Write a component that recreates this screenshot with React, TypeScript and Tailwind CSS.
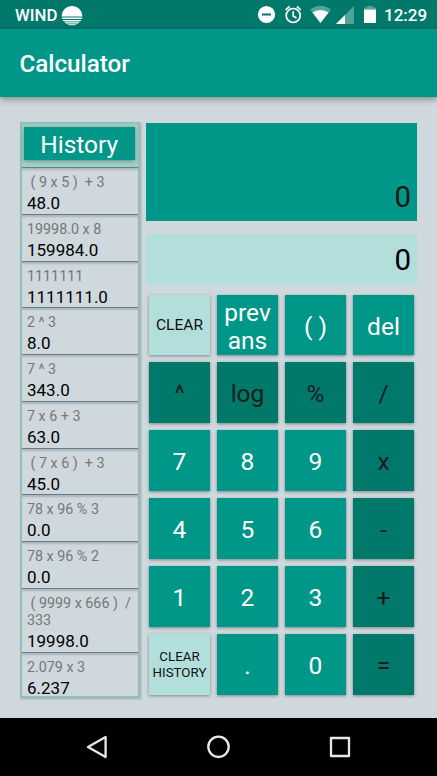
type Entry = { expr: string; value: string; tall?: boolean };

const entries: Entry[] = [
  { expr: " ( 9 x 5 )  + 3", value: "48.0" },
  { expr: "19998.0 x 8", value: "159984.0" },
  { expr: "1111111", value: "1111111.0" },
  { expr: "2 ^ 3", value: "8.0" },
  { expr: "7 ^ 3", value: "343.0" },
  { expr: "7 x 6 + 3", value: "63.0" },
  { expr: " ( 7 x 6 )  + 3", value: "45.0" },
  { expr: "78 x 96 % 3", value: "0.0" },
  { expr: "78 x 96 % 2", value: "0.0" },
  { expr: " ( 9999 x 666 )  /\n333", value: "19998.0", tall: true },
  { expr: "2.079 x 3", value: "6.237" },
];

type Tone = "light" | "main" | "dark";
type KeyDef = { label: string; tone: Tone; size?: string };

const keys: KeyDef[] = [
  { label: "CLEAR", tone: "light", size: "pt-px text-[15.5px] leading-[18px]" },
  { label: "prev\nans", tone: "main" },
  { label: "( )", tone: "main" },
  { label: "del", tone: "main" },
  { label: "^", tone: "dark" },
  { label: "log", tone: "dark" },
  { label: "%", tone: "dark" },
  { label: "/", tone: "dark" },
  { label: "7", tone: "main" },
  { label: "8", tone: "main" },
  { label: "9", tone: "main" },
  { label: "x", tone: "dark" },
  { label: "4", tone: "main" },
  { label: "5", tone: "main" },
  { label: "6", tone: "main" },
  { label: "-", tone: "dark" },
  { label: "1", tone: "main" },
  { label: "2", tone: "main" },
  { label: "3", tone: "main" },
  { label: "+", tone: "dark" },
  { label: "CLEAR\nHISTORY", tone: "light", size: "pt-px text-[13.3px] leading-[15.5px]" },
  { label: ".", tone: "main" },
  { label: "0", tone: "main" },
  { label: "=", tone: "dark" },
];

const tones: Record<Tone, string> = {
  light: "bg-[#b2dfdb] text-[#111]",
  main: "bg-[#009688] text-white",
  dark: "bg-[#00796b] text-[#1c1c1c]",
};

function StatusBar() {
  return (
    <div className="flex h-[29px] items-center bg-[#00796b] pl-[15px] text-[16.8px] font-medium text-white">
      <span className="w-[46px] pt-px leading-5">WIND</span>
      <svg className="h-[22px] w-[22px]" viewBox="0 0 22 22" fill="#fff">
        <path d="M0.5 12.4A10.5 10.5 0 1 1 21.5 12.4Z" />
        <path d="M0.8 13.5H21.2L20.8 15H1.2ZM1.8 16H20.2L19.2 17.4H2.8ZM3.5 18.3H18.5L17 19.4H5ZM6 20.2H16L13.5 21.3H8.5Z" />
      </svg>
      <svg className="ml-auto h-[29px] w-[124px]" viewBox="253 0 124 29">
        <circle cx="266.5" cy="14.5" r="8.6" fill="#fff" />
        <path d="M262 14.5H271" stroke="#00796b" strokeWidth="2" />
        <g fill="none" stroke="#fff" strokeWidth="1.7">
          <circle cx="293.2" cy="15.5" r="7" />
          <path d="M293.2 11.3V16L296.5 18M285.6 9.8L289.6 6.5M296.8 6.5L300.8 9.8" />
        </g>
        <path d="M310 9.5Q320.5 1.8 331 9.5L320.5 23Z" fill="#fff" opacity=".32" />
        <path d="M312.4 12.6Q320.5 7.2 328.6 12.6L320.5 23Z" fill="#fff" />
        <path d="M336 24L354 6V24Z" fill="#fff" opacity=".32" />
        <path d="M336 24L345 15V24Z" fill="#fff" />
        <path d="M364 9.5V7.5H367V6H373V7.5H376V9.5Z" fill="#fff" opacity=".32" />
        <path d="M364 9.5H376V22.2Q376 23 375.2 23H364.8Q364 23 364 22.2Z" fill="#fff" />
      </svg>
      <span className="ml-[7px] w-[53px] pt-px text-[17px] leading-5">12:29</span>
    </div>
  );
}

function HistoryPanel() {
  return (
    <aside className="flex h-[576px] w-[119.5px] flex-col border-2 border-[#90c1b9] bg-[#cfd8dd] shadow-[1px_1px_2px_rgba(0,0,0,0.22)]">
      <div className="h-[43px] shrink-0 bg-[#a0d1c9] pl-[2px] pr-[3px] pt-[3px]">
        <div className="flex h-[33px] items-center justify-center bg-[#009688] pt-1 text-[24.5px] leading-none text-white shadow-[0_1px_4px_rgba(0,0,0,0.35)]">
          History
        </div>
      </div>
      {entries.map((e) => (
        <div
          key={e.expr}
          className={`shrink-0 overflow-hidden border-t border-[#5f7e8e] pl-[5px] pt-[6px] shadow-[inset_0_3px_2px_-1px_rgba(0,0,0,0.16)] ${e.tall ? "h-[63.8px]" : "h-[46.75px]"}`}
        >
          <div className="whitespace-pre text-[14.3px] leading-[17px] text-[#777]">{e.expr}</div>
          <div className="mt-[2px] text-[17px] leading-5 text-black">{e.value}</div>
        </div>
      ))}
    </aside>
  );
}

function Key({ label, tone, size }: KeyDef) {
  return (
    <button
      className={`flex h-[60.7px] w-[61px] items-center justify-center whitespace-pre text-center shadow-[0_1px_3px_rgba(0,0,0,0.38)] ${tones[tone]} ${size ?? "pt-[3.5px] text-[24.5px] leading-[28px]"}`}
    >
      {label}
    </button>
  );
}

export default function App() {
  return (
    <div className="flex h-[776px] w-[437px] flex-col overflow-hidden bg-[#cfd8dd] font-[Roboto,sans-serif]">
      <StatusBar />
      <header className="z-10 flex h-[68px] shrink-0 items-center bg-[#009688] pl-[19.5px] pt-[2px] text-[24.2px] font-medium text-white shadow-[0_2px_7px_rgba(0,0,0,0.4)]">
        Calculator
      </header>
      <main className="flex h-[621px] shrink-0 items-start gap-[6.5px] pl-5 pt-[25px]">
        <HistoryPanel />
        <section className="flex w-[271px] flex-col pt-[0.5px]">
          <div className="flex h-[98.5px] items-end justify-end bg-[#009688] pb-[7px] pr-[6px] text-[29.5px] leading-[34px] text-[#181818]">
            0
          </div>
          <div className="mt-[12.5px] flex h-[51.5px] items-center justify-end bg-[#b2dfdb] pr-[6px] pt-[2px] text-[29.5px] leading-[34px] text-black">
            0
          </div>
          <div className="mt-[9.5px] grid w-[265px] grid-cols-4 gap-x-[7px] gap-y-[7.2px] self-center">
            {keys.map((k) => (
              <Key key={k.label} {...k} />
            ))}
          </div>
        </section>
      </main>
      <nav className="h-[58px] shrink-0 bg-black">
        <svg className="h-[58px] w-[437px]" viewBox="0 718 437 58" fill="none" stroke="#e8e8e8" strokeWidth="2.3" strokeLinejoin="round">
          <path d="M88 747L105.6 737V757Z" />
          <circle cx="218.5" cy="746.8" r="10.2" />
          <path d="M331 738H349V756H331Z" />
        </svg>
      </nav>
    </div>
  );
}
